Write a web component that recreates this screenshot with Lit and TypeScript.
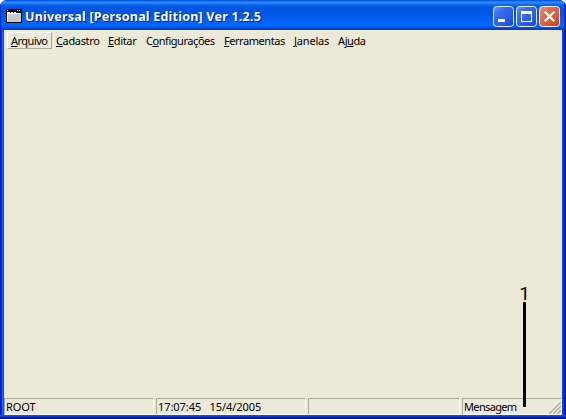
import { LitElement, html, css, svg } from "lit";
import { customElement, property } from "lit/decorators.js";

type Menu = { pre: string; key: string; post: string; cls: string };

const MENUS: Menu[] = [
  { pre: "", key: "A", post: "rquivo", cls: "arquivo" },
  { pre: "", key: "C", post: "adastro", cls: "cadastro" },
  { pre: "", key: "E", post: "ditar", cls: "editar" },
  { pre: "C", key: "o", post: "nfigurações", cls: "config" },
  { pre: "", key: "F", post: "erramentas", cls: "ferramentas" },
  { pre: "", key: "J", post: "anelas", cls: "janelas" },
  { pre: "Aj", key: "u", post: "da", cls: "ajuda" },
];

@customElement("caption-button")
class CaptionButton extends LitElement {
  @property() kind = "min";
  static styles = css`
    :host { display: block; width: 21px; height: 21px; }
    svg { display: block; }
  `;
  render() {
    const close = this.kind === "close";
    const glyph =
      this.kind === "min"
        ? svg`<rect x="5" y="13" width="7" height="3" fill="#fff"/>`
        : this.kind === "max"
        ? svg`<path d="M5 5h11v11H5zM6 8v7h9V8z" fill="#fff" fill-rule="evenodd"/>`
        : svg`<path d="M5.7 5.7L15.3 15.3M15.3 5.7L5.7 15.3" stroke="#fff" stroke-width="2.2"/>`;
    return html`<svg width="21" height="21" viewBox="0 0 21 21">
      <defs>
        <linearGradient id="g" x1="0" y1="0" x2="1" y2="1">
          <stop offset="0" stop-color=${close ? "#ee9a80" : "#6f97f5"} />
          <stop offset=".3" stop-color=${close ? "#e4704f" : "#3b6cec"} />
          <stop offset=".75" stop-color=${close ? "#da5030" : "#2459e2"} />
          <stop offset="1" stop-color=${close ? "#b03a18" : "#1944bd"} />
        </linearGradient>
      </defs>
      <rect x=".5" y=".5" width="20" height="20" rx="3" fill="url(#g)" stroke="#e6ecfb" />
      ${glyph}
    </svg>`;
  }
}

@customElement("app-root")
class AppRoot extends LitElement {
  static styles = css`
    :host {
      display: block; position: relative; width: 566px; height: 419px; overflow: hidden;
      background: #fff; font-family: "Noto Sans", "Open Sans", sans-serif; color: #000;
    }
    .window {
      box-sizing: border-box; width: 566px; height: 419px; display: flex; flex-direction: column;
      border-radius: 7px 7px 0 0; overflow: hidden;
      background: linear-gradient(90deg, #0019cf 0 1px, #0831d9 1px 2px, #166aee 2px 3px, #0855dd 3px 4px,
        #0855dd 4px 562px, #0048f1 562px 563px, #0040e0 563px 564px, #001ea0 564px 565px, #00138c 565px);
    }
    .title {
      height: 30px; flex: none; box-sizing: border-box; display: flex; align-items: flex-start; padding: 6px 6px 0 6px;
      background: linear-gradient(#0058e6 0, #0a5be8 1px, #3a90ff 2px, #2a83fb 3px, #0867f0 5px, #0057e4 7px,
        #0054e0 11px, #0058eb 16px, #0065fb 22px, #0066ff 25px, #005cf0 27px, #0049d8 28px, #003dbc 30px);
      box-shadow: inset 1px 0 #0030c4, inset -1px 0 #0022a4, inset -2px 0 #003cc8;
    }
    .app-icon { display: block; margin-top: 3px; flex: none; }
    .name {
      margin: 1px 0 0 3px; flex: 1; color: #fff; font-size: 12.5px; font-weight: 700; line-height: 20px;
      letter-spacing: 0.22px; white-space: pre; text-shadow: 1px 1px #0a1883;
    }
    .buttons { display: flex; gap: 2px; }
    .client { flex: 1; margin: 0 4px; background: #ece9d8; display: flex; flex-direction: column; }
    .menus { display: flex; padding: 2px 0 0 3px; height: 18px; font-size: 11px; }
    .menu { box-sizing: border-box; height: 17px; padding-left: 4px; line-height: 17px; white-space: nowrap; }
    .key { text-decoration: underline; text-underline-offset: 1px; text-decoration-thickness: 1px; }
    .arquivo {
      width: 45px; padding-left: 3px; border: 1px solid; border-color: #fff #aca899 #aca899 #fff; line-height: 15px;
      letter-spacing: -0.5px;
    }
    .cadastro { width: 52px; letter-spacing: -0.35px; }
    .editar { width: 38px; letter-spacing: -0.35px; }
    .config { width: 78px; letter-spacing: -0.45px; }
    .ferramentas { width: 69px; letter-spacing: -0.45px; }
    .janelas { width: 45px; padding-left: 5px; letter-spacing: -0.2px; }
    .ajuda { letter-spacing: -0.4px; }
    .workspace { flex: 1; }
    .status { display: flex; gap: 2px; height: 17px; font-size: 11px; }
    .cell {
      box-sizing: border-box; width: 150px; border: 1px solid; border-color: #aca899 #fff #fff #aca899;
      padding-left: 1px; line-height: 16px; white-space: pre; position: relative; letter-spacing: -0.06px;
    }
    .blank { width: 152px; }
    .last { width: 100px; letter-spacing: -0.65px; }
    .grip { position: absolute; right: 0; bottom: 0; }
    .bottom { height: 4px; flex: none; background: linear-gradient(#0855dd 0 1px, #0441d8 1px 2px, #001ea0 2px 3px, #00138c 3px); }
    .callout { position: absolute; left: 514px; top: 284px; width: 21px; display: flex; flex-direction: column; align-items: center; }
    .number { font: 19px/19px Roboto, sans-serif; height: 18px; }
    .line { width: 3px; height: 105px; background: #000; border-radius: 1px; }
  `;
  render() {
    return html`
      <div class="window">
        <div class="title">
          <svg class="app-icon" width="16" height="14" viewBox="0 0 16 14" shape-rendering="crispEdges">
            <rect width="16" height="14" fill="#000" />
            <rect x="1" y="4" width="14" height="9" fill="#fff" />
            <rect x="2" y="5" width="13" height="8" fill="#c8c8c8" />
            <path d="M1 1h1v1h-1zM11 1h1v1h-1zM13 1h1v1h-1zM1 3h3v1h-3zM5 3h2v1h-2zM8 3h2v1h-2z" fill="#fff" />
          </svg>
          <div class="name">Universal [Personal Edition] Ver 1.2.5</div>
          <div class="buttons">
            <caption-button kind="min"></caption-button>
            <caption-button kind="max"></caption-button>
            <caption-button kind="close"></caption-button>
          </div>
        </div>
        <div class="client">
          <div class="menus">
            ${MENUS.map((m) => html`<div class="menu ${m.cls}">${m.pre}<span class="key">${m.key}</span>${m.post}</div>`)}
          </div>
          <div class="workspace"></div>
          <div class="status">
            <div class="cell root">ROOT</div>
            <div class="cell time">17:07:45   15/4/2005</div>
            <div class="cell blank"></div>
            <div class="cell last">Mensagem<svg class="grip" width="13" height="13" viewBox="0 0 13 13">
                <path d="M0 13L13 0M4 13L13 4M8 13L13 8" stroke="#fff" stroke-width="1.2" />
                <path d="M1 13L13 1M5 13L13 5M9 13L13 9" stroke="#aca899" stroke-width="1.5" />
              </svg></div>
          </div>
        </div>
        <div class="bottom"></div>
      </div>
      <div class="callout"><div class="number">1</div><div class="line"></div></div>
    `;
  }
}
